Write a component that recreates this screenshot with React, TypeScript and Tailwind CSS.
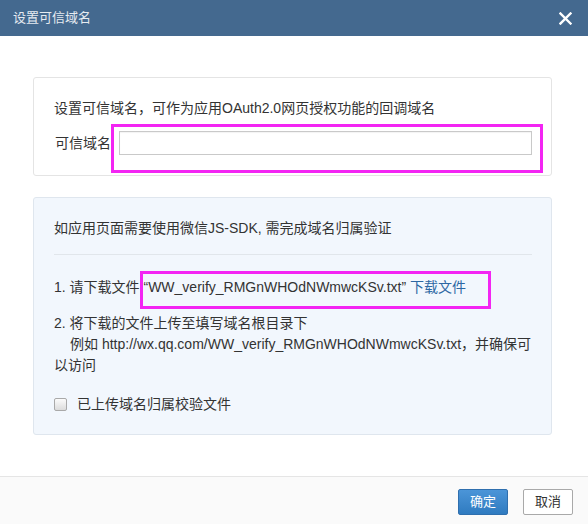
import React, { useState } from "react";

export default function App() {
  const [domain, setDomain] = useState("");
  const [uploaded, setUploaded] = useState(false);

  const fileName = "WW_verify_RMGnWHOdNWmwcKSv.txt";

  return (
    <div
      className="relative w-[588px] h-[524px] overflow-hidden bg-white text-[14px] text-[#333]"
      style={{ fontFamily: '"Liberation Sans", "Noto Sans CJK SC", sans-serif' }}
    >
      {/* Title bar */}
      <div className="flex h-[36px] items-center justify-between bg-[#44698f] pl-[13px] pr-[15px]">
        <span className="text-[13px] text-[#e6ebf1]">设置可信域名</span>
        <button className="flex h-[16px] w-[16px] items-center justify-center">
          <svg width="13" height="13" viewBox="0 0 13 13">
            <path d="M1.5 1.5 L11.5 11.5 M11.5 1.5 L1.5 11.5" stroke="#fff" strokeWidth="2.4" strokeLinecap="square" />
          </svg>
        </button>
      </div>

      {/* Body */}
      <div className="pt-[41px] pb-[41px]">
        {/* Trusted domain box */}
        <div className="ml-[33px] w-[519px] rounded-[3px] border border-[#e4e4e4] bg-white pl-[20px] pr-[19px] pt-[20px] pb-[20px]">
          <p className="leading-[20px]">设置可信域名，可作为应用OAuth2.0网页授权功能的回调域名</p>
          <div className="mt-[13px] flex items-center gap-[8px] pl-[1px]">
            <label htmlFor="domain" className="whitespace-nowrap">可信域名</label>
            <input
              id="domain"
              value={domain}
              onChange={(e) => setDomain(e.target.value)}
              className="h-[24px] flex-1 border border-[#c9c9c9] bg-white px-2 text-[13px] shadow-[inset_0_1px_1px_rgba(0,0,0,0.05)] outline-none"
            />
          </div>
        </div>

        {/* JS-SDK verify box */}
        <div className="ml-[33px] mt-[21px] w-[519px] rounded-[3px] border border-[#dfe6ee] bg-[#f2f7fd] pl-[20px] pr-[19px] pt-[20px] pb-[19px]">
          <p className="leading-[21px]">如应用页面需要使用微信JS-SDK, 需完成域名归属验证</p>
          <div className="mt-[15px] h-px bg-[#e1e6eb]" />
          <p className="mt-[22px] leading-[21px] whitespace-nowrap">
            1. 请下载文件 “{fileName}” <a className="text-[#2d67a3] cursor-pointer">下载文件</a>
          </p>
          <p className="mt-[15px] leading-[21px]">2. 将下载的文件上传至填写域名根目录下</p>
          <p className="leading-[21px] whitespace-nowrap pl-[16px]">
            例如 http://wx.qq.com/{fileName}，并确保可
          </p>
          <p className="leading-[21px]">以访问</p>
          <label className="mt-[18px] flex items-center gap-[10px] leading-[21px] cursor-pointer">
            <span
              onClick={() => setUploaded(!uploaded)}
              className="flex h-[13px] w-[13px] items-center justify-center rounded-[2px] border border-[#a9a9a9] bg-gradient-to-b from-[#fbfbfb] to-[#dcdcdc]"
            >
              {uploaded && (
                <svg width="9" height="9" viewBox="0 0 9 9">
                  <path d="M1 4.5 L3.5 7 L8 1.5" stroke="#333" strokeWidth="1.5" fill="none" />
                </svg>
              )}
            </span>
            <span>已上传域名归属校验文件</span>
          </label>
        </div>
      </div>

      {/* Footer */}
      <div className="border-t border-[#e5e5e5] bg-[#fafafa] pt-[12px] pb-[12px] pr-[15px] flex justify-end gap-[15px]">
        <button className="h-[26px] w-[50px] rounded-[2px] border border-[#2f6fae] bg-gradient-to-b from-[#4b95d8] to-[#2f7bc0] text-[13px] text-white">
          确定
        </button>
        <button className="h-[26px] w-[50px] rounded-[2px] border border-[#a9a9a9] bg-white text-[13px] text-[#333]">
          取消
        </button>
      </div>

      {/* Annotation highlights */}
      <div className="pointer-events-none absolute left-[111px] top-[124px] h-[49px] w-[432px] border-[3px] border-[#f325f3]" />
      <div className="pointer-events-none absolute left-[140px] top-[271px] h-[38px] w-[351px] border-[3px] border-[#f325f3]" />
    </div>
  );
}
